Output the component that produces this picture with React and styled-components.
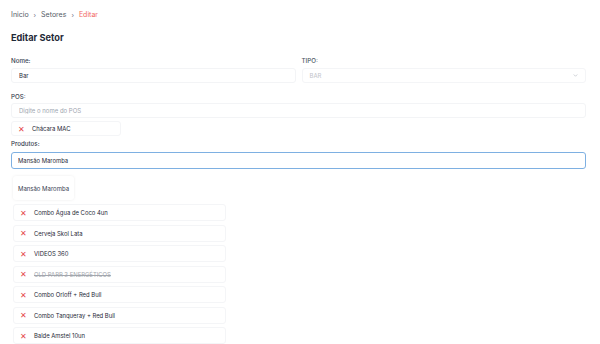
import React, { useState } from "react";
import styled, { createGlobalStyle } from "styled-components";

const GlobalStyle = createGlobalStyle`
    body {
        margin: 0;
        background: #ffffff;
        font-family: Inter, "Noto Sans", sans-serif;
        color: #1f2937;
    }
`;

const Page = styled.div`
    padding: 10px 14px 0 11px;
    width: 575px;
`;

const Crumbs = styled.nav`
    display: flex;
    align-items: center;
    gap: 5px;
    font-size: 7px;
    line-height: 10px;
    color: #555b66;
`;
const Crumb = styled.span`
    color: ${(p) => (p.$active ? "#f2685f" : "#555b66")};
`;
const Sep = styled.span`
    font-size: 6.5px;
    color: #6b7280;
`;

const Title = styled.h1`
    margin: 11px 0 0;
    font-size: 9.2px;
    line-height: 14px;
    font-weight: 700;
    color: #1f2937;
`;

const Row = styled.div`
    display: grid;
    grid-template-columns: 1fr 1fr;
    gap: 6px;
    margin-top: 11px;
`;

const Field = styled.div`
    display: flex;
    flex-direction: column;
    margin-top: ${(p) => p.$top || 0}px;
`;

const Label = styled.label`
    font-size: 6.2px;
    line-height: 9px;
    font-weight: 500;
    color: ${(p) => (p.$muted ? "#4b5563" : "#374151")};
    margin-bottom: ${(p) => p.$gap || 3}px;
`;

const Input = styled.input`
    box-sizing: border-box;
    height: 15px;
    width: 100%;
    padding: 0 7px;
    border: 1px solid #f3f4f6;
    border-radius: 3px;
    font-family: inherit;
    font-size: 6px;
    color: #1f2937;
    background: #fff;
    outline: none;
    &::placeholder {
        color: #a0a6b0;
    }
`;

const FocusInput = styled(Input)`
    height: 17px;
    border: 1.5px solid #7eb0e2;
    padding: 0 6px;
    font-size: 5.9px;
    caret-color: #111827;
`;

const Select = styled.div`
    box-sizing: border-box;
    height: 15px;
    display: flex;
    align-items: center;
    justify-content: space-between;
    padding: 0 7px;
    border: 1px solid #f4f5f7;
    border-radius: 3px;
    font-size: 6px;
    color: #bfc3c9;
`;

const Chip = styled.div`
    box-sizing: border-box;
    width: ${(p) => p.$w}px;
    height: ${(p) => p.$h || 17}px;
    display: flex;
    align-items: center;
    gap: 8px;
    padding: 0 6px;
    margin-top: ${(p) => p.$top || 0}px;
    border: 1px solid #f4f5f7;
    border-radius: 3px;
    background: #fff;
    font-size: 5.9px;
    color: #1f2937;
`;

const ChipText = styled.span`
    color: ${(p) => (p.$old ? "#a3a7ae" : "#1f2937")};
    text-decoration: ${(p) => (p.$old ? "line-through" : "none")};
`;

const Remove = styled.span`
    color: #e5484d;
    font-size: 8px;
    line-height: 1;
    display: inline-block;
    width: 6px;
`;

const Suggest = styled.div`
    box-sizing: border-box;
    margin: 7px 0 0 2px;
    width: 61px;
    height: 24px;
    display: flex;
    align-items: center;
    justify-content: center;
    border-radius: 3px;
    background: #fff;
    box-shadow: 0 0 3px rgba(0, 0, 0, 0.08);
    font-size: 6px;
    color: #374151;
`;

const List = styled.div`
    display: flex;
    flex-direction: column;
    gap: 3.5px;
    margin-top: 4px;
    margin-left: 2px;
`;

const Chevron = () => (
    <svg width="5" height="3" viewBox="0 0 6 4" fill="none">
        <path d="M1 1l2 2 2-2" stroke="#b0b5bd" strokeWidth="0.8" strokeLinecap="round" strokeLinejoin="round" />
    </svg>
);

const products = [
    { name: "Combo Água de Coco 4un" },
    { name: "Cerveja Skol Lata" },
    { name: "VIDEOS 360" },
    { name: "OLD PARR 3 ENERGÉTICOS", old: true },
    { name: "Combo Orloff + Red Bull" },
    { name: "Combo Tanqueray + Red Bull" },
    { name: "Balde Amstel 10un" },
];

export default function App() {
    const [search, setSearch] = useState("Mansão Maromba");

    return (
        <Page>
            <GlobalStyle />
            <Crumbs>
                <Crumb>Inicio</Crumb>
                <Sep>›</Sep>
                <Crumb>Setores</Crumb>
                <Sep>›</Sep>
                <Crumb $active>Editar</Crumb>
            </Crumbs>
            <Title>Editar Setor</Title>

            <Row>
                <Field>
                    <Label>Nome:</Label>
                    <Input defaultValue="Bar" />
                </Field>
                <Field>
                    <Label $muted>TIPO:</Label>
                    <Select>
                        BAR
                        <Chevron />
                    </Select>
                </Field>
            </Row>

            <Field $top={9}>
                <Label $gap={2}>POS:</Label>
                <Input placeholder="Digite o nome do POS" />
            </Field>
            <Chip $w={110} $h={15} $top={3}>
                <Remove>✕</Remove>
                <ChipText>Chácara MAC</ChipText>
            </Chip>

            <Field $top={3}>
                <Label $gap={4}>Produtos:</Label>
                <FocusInput autoFocus value={search} onChange={(e) => setSearch(e.target.value)} />
            </Field>
            <Suggest>Mansão Maromba</Suggest>

            <List>
                {products.map((item, index) => (
                    <Chip key={index} $w={213}>
                        <Remove>✕</Remove>
                        <ChipText $old={item.old}>{item.name}</ChipText>
                    </Chip>
                ))}
            </List>
        </Page>
    );
}
